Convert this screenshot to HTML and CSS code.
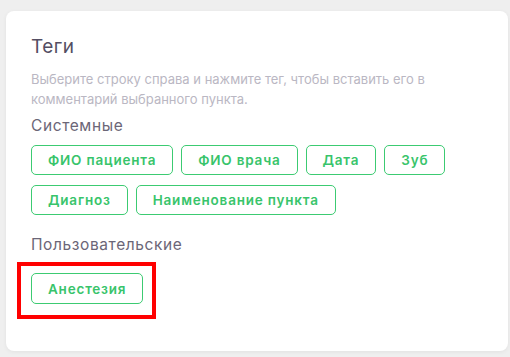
FILE: index.html
```html
<!DOCTYPE html>
<html lang="ru">
<head>
    <meta charset="UTF-8">
    <title>Теги</title>
    <link rel="stylesheet" href="styles.css">
</head>
<body>
    <div class="card">
        <h2 class="card-title">Теги</h2>
        <p class="hint">Выберите строку справа и нажмите тег, чтобы вставить его в комментарий выбранного пункта.</p>

        <div class="group">
            <h4>Системные</h4>
            <div class="tags">
                <button class="tag">ФИО пациента</button>
                <button class="tag">ФИО врача</button>
                <button class="tag">Дата</button>
                <button class="tag">Зуб</button>
                <button class="tag">Диагноз</button>
                <button class="tag">Наименование пункта</button>
            </div>
        </div>

        <div class="group user">
            <h4>Пользовательские</h4>
            <div class="tags">
                <div class="highlight">
                    <button class="tag">Анестезия</button>
                </div>
            </div>
        </div>
    </div>
</body>
</html>
```

FILE: styles.css
```css
body {
    margin: 0;
    padding: 11px 2px 6px 6px;
    background-color: #efefef;
    font-family: Inter, "Open Sans", sans-serif;
}
.card {
    background-color: white;
    border-radius: 8px;
    box-shadow: 0 1px 4px rgba(0,0,0,0.06);
    padding: 24px 25px 32px 25px;
    height: 340px;
    box-sizing: border-box;
}
.card-title {
    margin: 0;
    font-size: 19px;
    font-weight: 400;
    color: #544e63;
    line-height: 24px;
    letter-spacing: 0.4px;
}
.hint {
    margin: 10px 0 0;
    font-size: 13px;
    line-height: 20px;
    color: #bab7c3;
}
.group h4 {
    margin: 0;
    font-size: 15.5px;
    font-weight: 400;
    color: #6b6677;
    line-height: 20px;
    letter-spacing: 0.6px;
}
.group {
    margin-top: 7px;
}
.group.user {
    margin-top: 20px;
}
.tags {
    display: flex;
    flex-wrap: wrap;
    gap: 10px 8px;
    margin-top: 9px;
}
.tag {
    height: 30px;
    padding: 0 16px;
    background: white;
    border: 1px solid #3ccb72;
    border-radius: 5px;
    color: #38c46b;
    font-family: inherit;
    font-size: 13.5px;
    font-weight: 600;
    letter-spacing: 0.8px;
}
.highlight {
    margin: -2px 0 0 -14px;
    padding: 7px 9px 11px 10px;
    border: 4px solid #ff0000;
}
.highlight .tag {
    height: 31px;
}
```
